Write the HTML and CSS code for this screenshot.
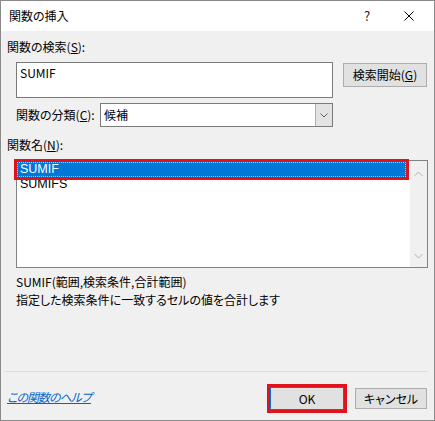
FILE: index.html
```
<!DOCTYPE html>
<html lang="ja">
<head>
<meta charset="utf-8">
<title>関数の挿入</title>
<link rel="stylesheet" href="styles.css">
</head>
<body>
<div class="dialog">
  <div class="titlebar">
    <span class="title">関数の挿入</span>
    <span class="spacer"></span>
    <span class="help">?</span>
    <svg class="close" width="10" height="10" viewBox="0 0 10 10"><path d="M0.5 0.5L9.5 9.5M9.5 0.5L0.5 9.5" stroke="#000" stroke-width="1" fill="none"/></svg>
  </div>
  <div class="content">
    <div class="label label-search">関数の検索(<u>S</u>):</div>
    <div class="search-row">
      <div class="textbox">SUMIF</div>
      <div class="btn search-btn">検索開始(<u>G</u>)</div>
    </div>
    <div class="cat-row">
      <span class="cat-label">関数の分類(<u>C</u>):</span>
      <div class="select">
        <span class="select-text">候補</span>
        <span class="drop"><svg width="8" height="5" viewBox="0 0 8 5"><path d="M0.5 0.5L4 4L7.5 0.5" stroke="#606060" fill="none"/></svg></span>
      </div>
    </div>
    <div class="label label-name">関数名(<u>N</u>):</div>
    <div class="listbox">
      <div class="items">
        <div class="item selected"><span class="focus">SUMIF</span></div>
        <div class="item">SUMIFS</div>
      </div>
      <div class="scrollbar">
        <svg width="9" height="6" viewBox="0 0 9 6"><path d="M0.5 5L4.5 1L8.5 5" stroke="#b4b4b4" fill="none"/></svg>
        <svg width="9" height="6" viewBox="0 0 9 6"><path d="M0.5 1L4.5 5L8.5 1" stroke="#b4b4b4" fill="none"/></svg>
      </div>
    </div>
    <div class="desc">
      <div>SUMIF(範囲,検索条件,合計範囲)</div>
      <div>指定した検索条件に一致するセルの値を合計します</div>
    </div>
  </div>
  <div class="separator"></div>
  <div class="footer">
    <a class="help-link">この関数のヘルプ</a>
    <span class="spacer"></span>
    <div class="btn ok-btn">OK</div>
    <div class="btn cancel-btn">キャンセル</div>
  </div>
</div>
</body>
</html>
```

FILE: styles.css
```
html, body {
  margin: 0;
  padding: 0;
  background: #f0f0f0;
}
.dialog {
  width: 435px;
  height: 421px;
  box-sizing: border-box;
  border: 1px solid #8a8a8a;
  background: #f0f0f0;
  display: flex;
  flex-direction: column;
  font-family: "Noto Sans CJK JP", "Noto Sans", sans-serif;
  font-size: 12px;
  font-feature-settings: "palt";
  color: #000;
}
.titlebar {
  height: 30px;
  flex: none;
  background: #fff;
  display: flex;
  align-items: center;
  padding-left: 8px;
  padding-right: 20px;
}
.title {
  font-size: 12px;
  line-height: 16px;
}
.spacer {
  flex: 1;
}
.help {
  width: 12px;
  text-align: center;
  font-size: 13px;
  line-height: 16px;
  margin-right: 31px;
  color: #222;
}
.close {
  display: block;
}
.content {
  flex: 1;
  padding-left: 6px;
  display: flex;
  flex-direction: column;
}
.label {
  line-height: 16px;
}
.label-search {
  margin-top: 8px;
}
.search-row {
  margin-top: 7px;
  margin-left: 9px;
  display: flex;
  align-items: flex-start;
  gap: 10px;
}
.textbox {
  width: 317px;
  height: 36px;
  box-sizing: border-box;
  border: 1px solid #7a7a7a;
  background: #fff;
  padding: 2px 3px;
  line-height: 16px;
}
.btn {
  box-sizing: border-box;
  background: #e1e1e1;
  border: 1px solid #adadad;
  display: flex;
  align-items: center;
  justify-content: center;
  line-height: 16px;
}
.search-btn {
  width: 84px;
  height: 24px;
  margin-top: 1px;
}
.cat-row {
  margin-top: 5px;
  margin-left: 9px;
  display: flex;
  align-items: center;
}
.cat-label {
  width: 84px;
  line-height: 16px;
}
.select {
  width: 233px;
  height: 24px;
  box-sizing: border-box;
  border: 1px solid #7a7a7a;
  background: #fff;
  display: flex;
  align-items: stretch;
}
.select-text {
  flex: 1;
  padding-left: 3px;
  line-height: 22px;
}
.drop {
  width: 16px;
  background: #e3e3e3;
  border-left: 1px solid #b0b0b0;
  display: flex;
  align-items: center;
  justify-content: center;
}
.drop svg {
  display: block;
}
.label-name {
  margin-top: 10px;
}
.listbox {
  margin-top: 7px;
  margin-left: 9px;
  width: 412px;
  height: 108px;
  box-sizing: border-box;
  border: 1px solid #828282;
  background: #fff;
  display: flex;
}
.items {
  flex: 1;
  padding-top: 1px;
  font-family: "Liberation Sans", "Noto Sans CJK JP", sans-serif;
  font-size: 12.5px;
}
.item {
  height: 15px;
  line-height: 15px;
  padding-left: 3px;
}
.item.selected {
  box-sizing: border-box;
  background: #0078d7;
  color: #fff;
  outline: 3px solid #e0121c;
  margin-right: 4px;
  padding-left: 0;
  border: 1px dotted #a8cbee;
  line-height: 13px;
}
.focus {
  padding-left: 2px;
}
.scrollbar {
  width: 17px;
  background: #f0f0f0;
  display: flex;
  flex-direction: column;
  align-items: center;
  justify-content: space-between;
  padding: 10px 0 8px;
}
.scrollbar svg {
  display: block;
}
.desc {
  margin-top: 5px;
  margin-left: 9px;
  line-height: 18px;
}
.separator {
  height: 1px;
  flex: none;
  background: #dcdcdc;
  margin: 0 6px 0 3px;
}
.footer {
  height: 48px;
  flex: none;
  display: flex;
  align-items: flex-start;
  padding-left: 6px;
  padding-right: 7px;
}
.help-link {
  margin-top: 17px;
  line-height: 16px;
  color: #0066cc;
  text-decoration: underline;
  font-style: italic;
  letter-spacing: -1px;
}
.ok-btn {
  width: 74px;
  height: 23px;
  margin-top: 15px;
  border-color: #0078d7;
  outline: 3px solid #e0121c;
  outline-offset: 0;
}
.cancel-btn {
  width: 72px;
  height: 21px;
  margin-top: 16px;
  margin-left: 11px;
}
```
